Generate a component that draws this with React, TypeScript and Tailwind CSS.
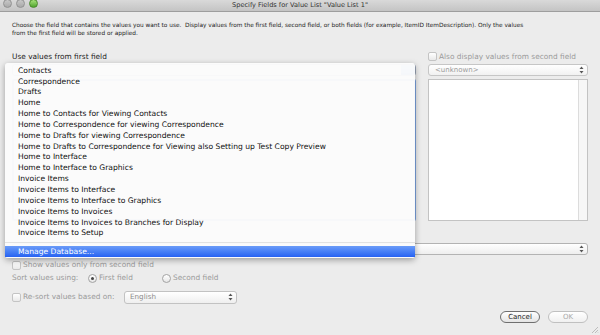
import React from 'react';

const font = { fontFamily: '"DejaVu Sans", "Liberation Sans", sans-serif' };

const items = [
  'Contacts',
  'Correspondence',
  'Drafts',
  'Home',
  'Home to Contacts for Viewing Contacts',
  'Home to Correspondence for viewing Correspondence',
  'Home to Drafts for viewing Correspondence',
  'Home to Drafts to Correspondence for Viewing also Setting up Test Copy Preview',
  'Home to Interface',
  'Home to Interface to Graphics',
  'Invoice Items',
  'Invoice Items to Interface',
  'Invoice Items to Interface to Graphics',
  'Invoice Items to Invoices',
  'Invoice Items to Invoices to Branches for Display',
  'Invoice Items to Setup',
];

function Arrows() {
  return (
    <svg width="5" height="8" viewBox="0 0 5 8" className="shrink-0">
      <path d="M2.5 0.5 L4.5 3 L0.5 3 Z" fill="#555" />
      <path d="M2.5 7.5 L4.5 5 L0.5 5 Z" fill="#555" />
    </svg>
  );
}

function Checkbox({ disabled }: { disabled?: boolean }) {
  return (
    <span
      className={`inline-block w-[9px] h-[9px] rounded-[2px] border bg-gradient-to-b from-white to-[#e9e9e9] shrink-0 ${
        disabled ? 'border-[#c4c4c4]' : 'border-[#9a9a9a]'
      }`}
    />
  );
}

function Radio({ on }: { on?: boolean }) {
  return (
    <span className="inline-flex items-center justify-center w-[9px] h-[9px] rounded-full border border-[#a3a3a3] bg-gradient-to-b from-white to-[#e6e6e6] shrink-0">
      {on && <span className="w-[3px] h-[3px] rounded-full bg-[#444]" />}
    </span>
  );
}

export default function App() {
  return (
    <div className="relative w-[600px] h-[335px] overflow-hidden bg-[#ececec] text-[#1a1a1a]" style={font}>
      {/* title bar */}
      <div className="relative h-[12px] bg-gradient-to-b from-[#d9d9d9] to-[#c4c4c4] border-b border-[#9e9e9e] flex items-center justify-center">
        <div className="absolute left-[3px] top-[-1px] flex gap-[4px]">
          <span className="w-[9px] h-[9px] rounded-full bg-gradient-to-b from-[#c9c9c9] to-[#a9a9a9] border border-[#929292]" />
          <span className="w-[9px] h-[9px] rounded-full bg-gradient-to-b from-[#c9c9c9] to-[#a9a9a9] border border-[#929292]" />
          <span className="w-[9px] h-[9px] rounded-full bg-gradient-to-b from-[#a8e27a] to-[#4fa52c] border border-[#4a8a2c]" />
        </div>
        <span className="text-[6.6px] leading-[8px] text-[#333] mt-[-2px]">Specify Fields for Value List "Value List 1"</span>
      </div>

      <div className="px-[12px]">
        <p className="mt-[9px] text-[5.8px] leading-[8px] text-[#222]">
          Choose the field that contains the values you want to use.&nbsp; Display values from the first field, second field, or both fields (for example, ItemID ItemDescription). Only the values
          <br />
          from the first field will be stored or applied.
        </p>

        <div className="mt-[14px] flex gap-[12px]">
          {/* left column */}
          <div className="w-[404px] flex flex-col">
            <div className="h-[11px] flex items-center text-[7.4px]">Use values from first field</div>
            <div className="mt-[2px] h-[12px] rounded-[3px] border border-[#9aa5b8] bg-white flex justify-end">
              <span className="w-[14px] h-full rounded-r-[3px] bg-gradient-to-b from-[#9cc3f5] to-[#3e7fe0]" />
            </div>
            <div className="mt-[3px] h-[142px] bg-white border-[2px] border-[#7da5e3] rounded-[2px]" />
          </div>

          {/* right column */}
          <div className="w-[160px] flex flex-col">
            <div className="h-[11px] flex items-center gap-[2px] text-[7.4px] text-[#9a9a9a]">
              <Checkbox disabled />
              <span>Also display values from second field</span>
            </div>
            <div className="mt-[2px] h-[12px] rounded-[3px] border border-[#c6c6c6] bg-gradient-to-b from-white to-[#f1f1f1] flex items-center justify-between pl-[6px] pr-[3px] text-[7px] text-[#9a9a9a]">
              <span>&lt;unknown&gt;</span>
              <Arrows />
            </div>
            <div className="mt-[3px] h-[142px] bg-white border border-[#c3c3c3] flex justify-end">
              <span className="w-[9px] h-full border-l border-[#dcdcdc] bg-[#f7f7f7]" />
            </div>
          </div>
        </div>

        <div className="mt-[22px] h-[12px] rounded-[3px] border border-[#b3b3b3] bg-gradient-to-b from-white to-[#eeeeee] flex items-center justify-end pr-[3px]">
          <Arrows />
        </div>

        <div className="mt-[5px] h-[10px] flex items-center gap-[2px] text-[7.4px] text-[#9a9a9a]">
          <Checkbox disabled />
          <span>Show values only from second field</span>
        </div>

        <div className="mt-[3px] h-[10px] flex items-center text-[7.4px] text-[#9a9a9a]">
          <span className="w-[76px]">Sort values using:</span>
          <Radio on />
          <span className="ml-[2px] w-[63px]">First field</span>
          <Radio />
          <span className="ml-[2px]">Second field</span>
        </div>

        <div className="mt-[7px] h-[14px] flex items-center text-[7.4px] text-[#9a9a9a]">
          <Checkbox disabled />
          <span className="ml-[2px] w-[101px]">Re-sort values based on:</span>
          <div className="w-[113px] h-[13px] rounded-[3px] border border-[#c2c2c2] bg-gradient-to-b from-white to-[#efefef] flex items-center justify-between pl-[5px] pr-[3px]">
            <span className="text-[7.2px] text-[#8c8c8c]">English</span>
            <Arrows />
          </div>
        </div>

        <div className="mt-[7px] flex justify-end gap-[8px] pr-[-1px]">
          <button className="w-[40px] h-[12px] rounded-full border border-[#6f6f6f] bg-gradient-to-b from-white to-[#e4e4e4] text-[7px] leading-none text-[#222]">
            Cancel
          </button>
          <button className="w-[40px] h-[12px] rounded-full border border-[#c0c0c0] bg-gradient-to-b from-white to-[#f0f0f0] text-[7px] leading-none text-[#aaa]">
            OK
          </button>
        </div>
      </div>

      {/* resize grip */}
      <svg className="absolute right-[1px] bottom-[1px]" width="8" height="8" viewBox="0 0 8 8">
        <path d="M7 1 L1 7 M7 4 L4 7 M7 6.5 L6.5 7" stroke="#b0b0b0" strokeWidth="0.8" />
      </svg>

      {/* popup menu */}
      <div className="absolute left-[5px] top-[63px] w-[410px] bg-[#fbfbfb]/[0.97] rounded-[3px] shadow-[0_2px_6px_rgba(0,0,0,0.35)] pt-[2px] pb-[1px] text-[7.6px] text-[#111]">
        {items.map((it) => (
          <div key={it} className="h-[10.85px] flex items-center pl-[13px] whitespace-nowrap">
            {it}
          </div>
        ))}
        <div className="h-[7.4px] flex items-center">
          <div className="w-full h-px bg-[#e2e2e2]" />
        </div>
        <div className="h-[11px] flex items-center pl-[13px] bg-gradient-to-b from-[#6a9bf8] to-[#2761f2] text-white">
          Manage Database...
        </div>
      </div>
    </div>
  );
}
